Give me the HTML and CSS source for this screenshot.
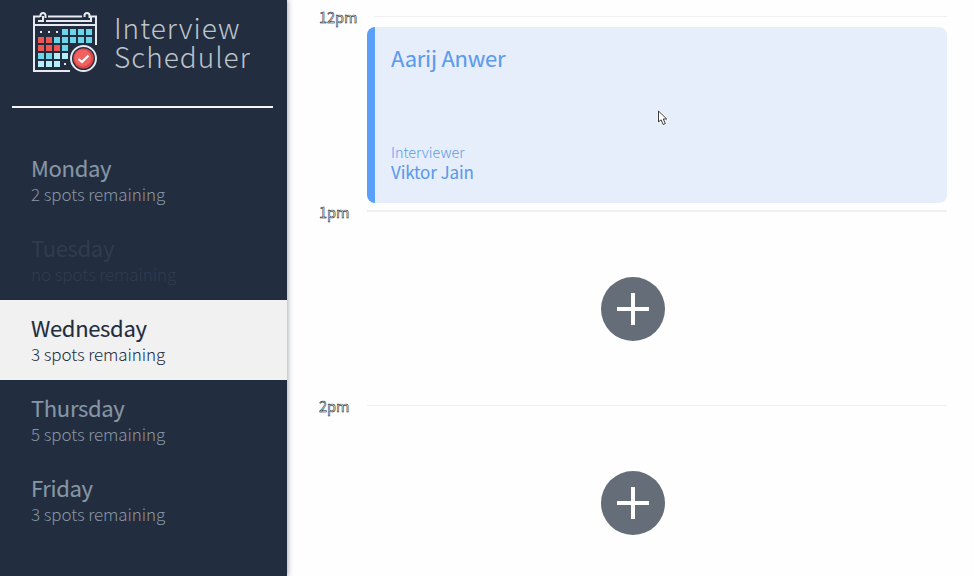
FILE: index.html
```html
<!DOCTYPE html>
<html lang="en">
<head>
<meta charset="utf-8">
<title>Interview Scheduler</title>
<link rel="stylesheet" href="styles.css">
</head>
<body>
<main class="layout">
  <section class="sidebar">
    <header class="brand">
      <svg class="brand-icon" width="66" height="62" viewBox="0 0 66 62" aria-hidden="true">
        <g fill="none" stroke="#e6eaf0" stroke-width="2">
          <path d="M38 59H2V4.500H8M16 4.500H50M58 4.500H64V33M2 13H64M6 9H11V4M14 9H59V4"/>
          <path d="M8.500 5V3.500a2.500 2.500 0 0 1 5 0V6M52.500 5V3.500a2.500 2.500 0 0 1 5 0V6"/>
        </g>
        <path fill="#e6eaf0" d="M8 19h2v2H8zM16 19h2v2h-2zM24 19h2v2h-2zM32 51h2v2h-2z"/>
        <path fill="#6bd5ea" d="M30 17h6v6h-6zM38 17h6v6h-6zM46 17h6v6h-6zM54 17h6v6h-6zM22 25h6v6h-6zM30 25h6v6h-6zM38 25h6v6h-6zM46 25h6v6h-6zM54 25h6v6h-6zM30 33h6v6h-6zM6 41h6v6H6zM14 41h6v6h-6z"/>
        <path fill="#ec5754" d="M6 25h6v6H6zM14 25h6v6h-6zM6 33h6v6H6zM14 33h6v6h-6zM22 33h6v6h-6z"/>
        <path fill="#b5edf9" d="M22 41h6v6h-6zM30 41h6v6h-6zM6 49h6v6H6zM14 49h6v6h-6zM22 49h6v6h-6z"/>
        <circle cx="51.500" cy="46.500" r="14.500" fill="#222d3f"/>
        <circle cx="51.500" cy="46.500" r="12.500" fill="#222d3f" stroke="#e6eaf0" stroke-width="2"/>
        <circle cx="51.500" cy="46.500" r="10.300" fill="#d94748"/>
        <circle cx="50.800" cy="46" r="8.500" fill="#f0625f"/>
        <path d="m46.500 47 3.500 3 6.500-6.500" fill="none" stroke="#fff" stroke-width="2.200"/>
      </svg>
      <h1 class="brand-name"><span>Interview</span><span>Scheduler</span></h1>
    </header>
    <hr class="separator">
    <ul class="days">
      <li class="day"><h2>Monday</h2><p>2 spots remaining</p></li>
      <li class="day day-full"><h2>Tuesday</h2><p>no spots remaining</p></li>
      <li class="day day-selected"><h2>Wednesday</h2><p>3 spots remaining</p></li>
      <li class="day"><h2>Thursday</h2><p>5 spots remaining</p></li>
      <li class="day"><h2>Friday</h2><p>3 spots remaining</p></li>
    </ul>
  </section>
  <section class="schedule">
    <article class="slot slot-booked">
      <header class="slot-head"><h4>12pm</h4><hr></header>
      <div class="card">
        <h2>Aarij Anwer</h2>
        <div><h5>Interviewer</h5><h3>Viktor Jain</h3></div>
      </div>
    </article>
    <article class="slot">
      <header class="slot-head slot-head-strong"><h4>1pm</h4><hr></header>
      <div class="add">
        <svg width="64" height="64" viewBox="0 0 64 64"><circle cx="32" cy="32" r="32" fill="#656d78"/><path d="M32 16v32M16 32h32" stroke="#fff" stroke-width="4"/></svg>
      </div>
    </article>
    <article class="slot">
      <header class="slot-head"><h4>2pm</h4><hr></header>
      <div class="add">
        <svg width="64" height="64" viewBox="0 0 64 64"><circle cx="32" cy="32" r="32" fill="#656d78"/><path d="M32 16v32M16 32h32" stroke="#fff" stroke-width="4"/></svg>
      </div>
    </article>
  </section>
  <svg class="cursor" width="12" height="17" viewBox="0 0 12 17" aria-hidden="true"><path d="M1.500 1v11l2.600-2.200 2 4.700 2.200-.9-2-4.600h3.400z" fill="#fff" stroke="#fff" stroke-width="2"/><path d="M1.500 1v11l2.600-2.200 2 4.700 2.200-.9-2-4.600h3.400z" fill="#fff" stroke="#222" stroke-width=".9"/></svg>
</main>
</body>
</html>
```
FILE: styles.css
```css
* { box-sizing: border-box; margin: 0; padding: 0; }
body {
  width: 974px;
  height: 576px;
  overflow: hidden;
  background: #fefefe;
  font-family: "Noto Sans CJK SC", "Noto Sans", sans-serif;
}
.layout { position: relative; display: flex; height: 576px; }
.sidebar {
  width: 287px;
  flex: none;
  background: #222d3f;
  color: #8796a5;
  box-shadow: 1px 0 5px rgba(34, 45, 63, .4);
}
.brand { display: flex; height: 106px; padding: 12px 0 0 32px; }
.brand-icon { flex: none; }
.brand-name {
  margin: 1px 0 0 16px;
  font-size: 28px;
  font-weight: 300;
  line-height: 29px;
  letter-spacing: 1px;
  color: #bdc3cb;
}
.brand-name span { display: block; width: max-content; }
.separator { width: 261px; height: 2px; margin-left: 12.4px; border: 0; background: #f4f5f7; }
.days { margin-top: 32px; list-style: none; }
.day { height: 80px; padding: 12px 31px 0; }
.day h2 { font-size: 22px; font-weight: 400; line-height: 30px; letter-spacing: -.33px; -webkit-text-stroke: .12px; }
.day p { margin-top: 1px; font-size: 17px; font-weight: 300; line-height: 21px; letter-spacing: -.09px; }
.day-full { color: #303c4d; }
.day-selected { background: #f1f1f2; color: #222d3f; }
.schedule { flex: 1; padding: 7px 27px 0 32px; }
.slot { height: 194px; }
.slot-booked { height: 195px; }
.slot-head { display: flex; height: 20px; }
.slot-head h4 {
  width: 48px;
  font-size: 14.5px;
  font-weight: 400;
  line-height: 19px;
  color: #fff;
  -webkit-text-stroke: .5px #000;
}
.slot-head hr { flex: 1; height: 1px; margin-top: 9px; border: 0; background: #f0f0f0; }
.slot-booked hr { margin-left: 7px; }
.slot-head-strong hr { height: 2px; margin-top: 8px; }
.card {
  display: flex;
  flex-direction: column;
  justify-content: space-between;
  height: 176px;
  margin-left: 48px;
  padding: 14px 16px 21px;
  border-left: 8px solid #5a9ffa;
  border-radius: 8px;
  background: #e6eefb;
  color: #5b9aec;
}
.card h2 { font-size: 22px; font-weight: 400; line-height: 32px; letter-spacing: -.25px; -webkit-text-stroke: .12px; }
.card h5 { font-size: 14.4px; font-weight: 300; line-height: 21px; }
.card h3 { font-size: 17px; font-weight: 400; line-height: 20px; letter-spacing: -.12px; -webkit-text-stroke: .12px; }
.add { display: flex; justify-content: center; padding-top: 55px; }
.add svg { margin-right: 1px; }
.cursor { position: absolute; left: 657px; top: 110px; }
```
